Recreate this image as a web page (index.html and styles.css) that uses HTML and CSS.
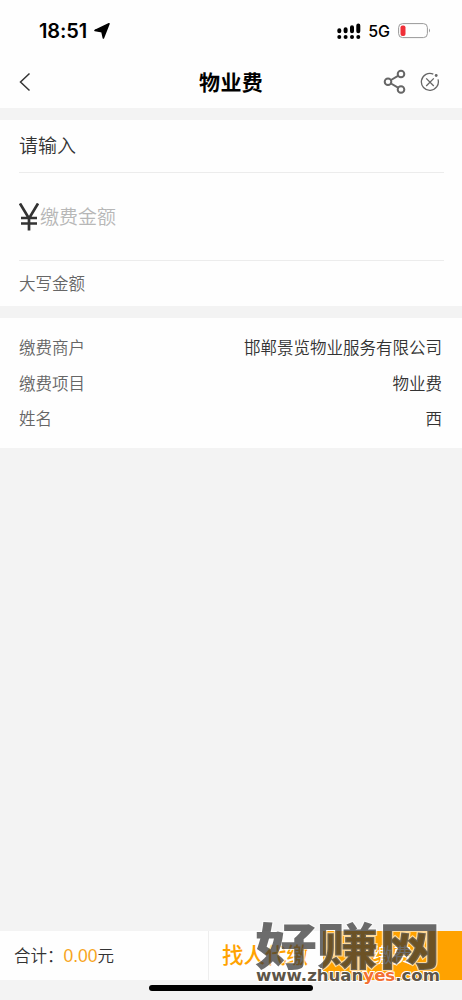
FILE: index.html
```html
<!DOCTYPE html>
<html lang="zh-CN">
<head>
<meta charset="utf-8">
<title>物业费</title>
<link rel="stylesheet" href="styles.css">
</head>
<body>
<div class="screen">
  <header class="top">
    <div class="status">
      <span class="time">18:51</span>
      <svg class="locate" width="16" height="16" viewBox="0 0 16 16"><path d="M15 .8 9.4 15 8 8.8 1 7.4Z" fill="#000" stroke="#000" stroke-width="1.6" stroke-linejoin="round"/></svg>
      <svg class="signal" width="24" height="17" viewBox="0 0 24 17"><g stroke="#000" stroke-width="4" stroke-linecap="round"><path d="M2.3 7.3v1M8.6 6.3v2M15 4.3v4M21.3 2.5v5.8"/><path d="M2.3 14h.01M8.6 14h.01M15 14h.01M21.3 14h.01"/></g></svg>
      <span class="net">5G</span>
      <svg class="battery" width="33" height="16" viewBox="0 0 33 16"><rect x=".6" y=".6" width="28.8" height="14" rx="4" fill="none" stroke="#999"/><rect x="2.5" y="2.4" width="5" height="10.6" rx="2" fill="#f03038"/><path d="M31 5.5q2 2 0 4Z" fill="#999"/></svg>
    </div>
    <nav class="nav">
      <svg class="back" width="12" height="20" viewBox="0 0 12 20"><path d="M10.5 1.5 1.5 10l9 8.5" fill="none" stroke="#333" stroke-width="1.5"/></svg>
      <h1 class="title">物业费</h1>
      <svg class="share" width="24" height="26" viewBox="0 0 24 26"><g fill="none" stroke="#666" stroke-width="2"><circle cx="5" cy="12.7" r="3.3"/><circle cx="18" cy="5" r="3.3"/><circle cx="18" cy="20.5" r="3.3"/><path d="m8 11 7-4.2M8 14.5l7 4.2"/></g></svg>
      <svg class="close" width="20" height="20" viewBox="0 0 20 20"><g fill="none" stroke="#666" stroke-width="1.3"><path d="M13.3 2.1A8.5 8.5 0 1 0 18 7.4M6.2 6.4l7.6 7.6M13.8 6.4l-7.6 7.6"/></g><circle cx="16.2" cy="3.5" r="1.4" fill="#666"/></svg>
    </nav>
  </header>
  <section class="card amount">
    <div class="prompt">请输入</div>
    <div class="entry"><svg class="yen" width="20" height="28" viewBox="0 0 20 28"><path d="M1 .5 10 15.5 19 .5M10 15v12.5M2 15h16M2 20.5h16" fill="none" stroke="#333" stroke-width="2.7"/></svg><span class="hint">缴费金额</span></div>
    <div class="words">大写金额</div>
  </section>
  <section class="card details">
    <div class="row"><span>缴费商户</span><b>邯郸景览物业服务有限公司</b></div>
    <div class="row"><span>缴费项目</span><b>物业费</b></div>
    <div class="row"><span>姓名</span><b>西</b></div>
  </section>
  <footer class="bar">
    <div class="total">合计：<em>0.00</em>元</div>
    <div class="proxy">找人代缴</div>
    <div class="pay">缴费</div>
  </footer>
  <svg class="mark" width="200" height="76" viewBox="0 0 200 76">
    <text class="mark-cn" transform="translate(3 47.5) scale(1.25 1)" x="0" y="0">好赚网</text>
    <text class="mark-url" x="4" y="64" textLength="184" lengthAdjust="spacingAndGlyphs">www.zhuan<tspan class="mark-yes">yes</tspan>.com</text>
  </svg>
  <div class="home"></div>
</div>
</body>
</html>
```
FILE: styles.css
```css
* { box-sizing: border-box; }
body { margin: 0; background: #f3f3f3; font-family: "Liberation Sans", "Noto Sans CJK SC", sans-serif; font-weight: 350; color: #333; }
.screen { position: relative; width: 462px; height: 1000px; display: flex; flex-direction: column; overflow: hidden; }
.top { height: 108px; background: #fefefe; }
.status { height: 56px; padding: 6px 31px 0 39px; display: flex; align-items: center; color: #000; }
.time { font: 600 20px/24px Inter, sans-serif; width: 51px; letter-spacing: -.1px; }
.locate { margin-left: 4px; }
.signal { margin-left: auto; }
.net { font: 500 16px/20px Inter, sans-serif; margin: 0 8px 0 7px; }
.nav { height: 52px; display: grid; grid-template-columns: 180px 102px 24px 20px; justify-content: start; align-items: center; padding-left: 19px; }
.title { margin: 1px 0 0; font-size: 21px; line-height: 30px; font-weight: 700; color: #000; letter-spacing: .4px; }
.share { margin-left: 82px; }
.close { margin-left: 95px; }
.card { background: #fefefe; margin-top: 12px; padding: 0 18px 0 19px; }
.amount { height: 186px; }
.prompt { height: 53px; line-height: 53px; font-size: 19px; border-bottom: 1px solid #ececec; }
.entry { height: 88px; display: flex; align-items: center; padding-bottom: 2px; border-bottom: 1px solid #ececec; }
.yen { margin-top: 2px; }
.hint { font-size: 19px; color: #b7b7b7; margin-left: 1px; }
.words { font-size: 16.5px; line-height: 47px; color: #666; }
.details { height: 130px; padding: 12px 20px 0 19px; }
.row { display: flex; justify-content: space-between; height: 35.6px; line-height: 36px; font-size: 16.5px; color: #666; }
.row b { font-weight: 350; color: #333; }
.bar { margin-top: 483px; height: 49px; display: grid; grid-template-columns: 208px 115px 1fr; grid-template-rows: 49px; background: #fefefe; line-height: 51px; }
.total { padding-left: 14px; font-size: 16.5px; }
.total em { color: #f7a51c; font-style: normal; font-size: 17.5px; }
.proxy { border-left: 1px solid #eee; font-size: 21.5px; font-weight: 500; color: #ffa200; padding-left: 13px; white-space: nowrap; }
.pay { background: #ffa200; color: #fff; font-size: 20px; text-align: center; }
.mark { position: absolute; left: 252px; top: 917px; }
.mark-cn { font: 900 49.5px "Noto Sans CJK SC", sans-serif; fill: #333; fill-opacity: .72; stroke: #fff; stroke-opacity: .6; stroke-width: 2px; paint-order: stroke; }
.mark-url { font: 700 16.5px "DejaVu Sans", sans-serif; fill: #5d5548; stroke: #fff; stroke-width: 2px; paint-order: stroke; }
.mark-yes { fill: #f36f32; }
.home { position: absolute; left: 149px; top: 985px; width: 164px; height: 6px; border-radius: 3px; background: #000; }
```
